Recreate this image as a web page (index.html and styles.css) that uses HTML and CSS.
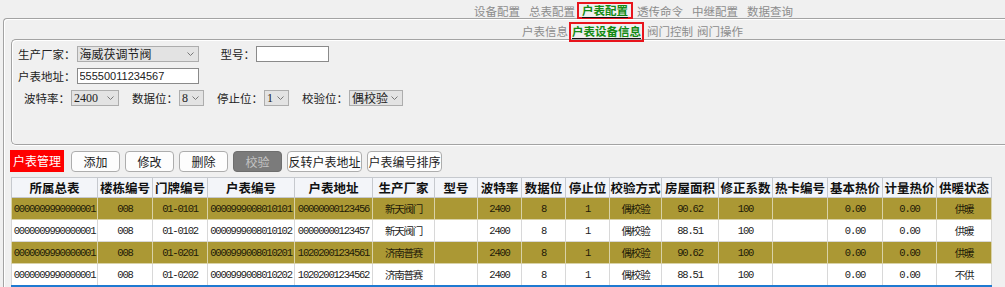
FILE: index.html
```html
<!DOCTYPE html>
<html lang="zh-CN">
  <head>
    <meta charset="UTF-8" />
    <meta name="viewport" content="width=device-width, initial-scale=1.0" />
    <title>户表设备信息</title>
    <link rel="stylesheet" href="styles.css">
  </head>
  <body>
    <div class="topnav">
      <a href="#">设备配置</a>
      <a href="#">总表配置</a>
      <a href="#" class="current">户表配置</a>
      <a href="#">透传命令</a>
      <a href="#">中继配置</a>
      <a href="#">数据查询</a>
    </div>

    <div class="panel">
      <div class="subnav">
        <a href="#">户表信息</a>
        <a href="#" class="current">户表设备信息</a>
        <a href="#">阀门控制</a>
        <a href="#">阀门操作</a>
      </div>

      <!-- filter box -->
      <div class="group">
        <div class="row">
          <label class="field">生产厂家：
            <span class="combo w-factory"><span>海威茯调节阀</span><svg width="7" height="4" viewBox="0 0 7 4"><polyline points="0.5,0.5 3.5,3.5 6.5,0.5" fill="none" stroke="#777" stroke-width="1"/></svg></span>
          </label>
          <label class="field">型号：
            <input class="text w-model" type="text" />
          </label>
        </div>
        <div class="row">
          <label class="field">户表地址：
            <input class="text w-addr" type="text" value="55550011234567" />
          </label>
        </div>
        <div class="row row-serial">
          <label class="field">波特率：
            <span class="combo w-baud"><span>2400</span><svg width="7" height="4" viewBox="0 0 7 4"><polyline points="0.5,0.5 3.5,3.5 6.5,0.5" fill="none" stroke="#777" stroke-width="1"/></svg></span>
          </label>
          <label class="field">数据位：
            <span class="combo w-small"><span>8</span><svg width="7" height="4" viewBox="0 0 7 4"><polyline points="0.5,0.5 3.5,3.5 6.5,0.5" fill="none" stroke="#777" stroke-width="1"/></svg></span>
          </label>
          <label class="field">停止位：
            <span class="combo w-small"><span>1</span><svg width="7" height="4" viewBox="0 0 7 4"><polyline points="0.5,0.5 3.5,3.5 6.5,0.5" fill="none" stroke="#777" stroke-width="1"/></svg></span>
          </label>
          <label class="field">校验位：
            <span class="combo w-parity"><span>偶校验</span><svg width="7" height="4" viewBox="0 0 7 4"><polyline points="0.5,0.5 3.5,3.5 6.5,0.5" fill="none" stroke="#777" stroke-width="1"/></svg></span>
          </label>
        </div>
      </div>

      <div class="toolbar">
        <span class="tag">户表管理</span>
        <button class="btn" type="button">添加</button>
        <button class="btn" type="button">修改</button>
        <button class="btn" type="button">删除</button>
        <button class="btn btn-off" type="button">校验</button>
        <button class="btn btn-wide" type="button">反转户表地址</button>
        <button class="btn btn-wide" type="button">户表编号排序</button>
      </div>

      <table class="grid">
        <colgroup>
          <col style="width: 86px" />
          <col style="width: 55px" />
          <col style="width: 55px" />
          <col style="width: 87px" />
          <col style="width: 78px" />
          <col style="width: 62px" />
          <col style="width: 43px" />
          <col style="width: 44px" />
          <col style="width: 44px" />
          <col style="width: 44px" />
          <col style="width: 52px" />
          <col style="width: 57px" />
          <col style="width: 54px" />
          <col style="width: 55px" />
          <col style="width: 55px" />
          <col style="width: 54px" />
          <col style="width: 55px" />
        </colgroup>
        <thead>
          <tr>
            <th>所属总表</th>
            <th>楼栋编号</th>
            <th>门牌编号</th>
            <th>户表编号</th>
            <th>户表地址</th>
            <th>生产厂家</th>
            <th>型号</th>
            <th>波特率</th>
            <th>数据位</th>
            <th>停止位</th>
            <th>校验方式</th>
            <th>房屋面积</th>
            <th>修正系数</th>
            <th>热卡编号</th>
            <th>基本热价</th>
            <th>计量热价</th>
            <th>供暖状态</th>
          </tr>
        </thead>
        <tbody>
          <tr class="alt">
            <td>0000009990000001</td><td>008</td><td>01-0101</td><td>0000999008010101</td><td>00000000123456</td><td>新天阀门</td><td></td>
            <td>2400</td><td>8</td><td>1</td><td>偶校验</td><td>90.62</td><td>100</td><td></td><td>0.00</td><td>0.00</td><td>供暖</td>
          </tr>
          <tr>
            <td>0000009990000001</td><td>008</td><td>01-0102</td><td>0000999008010102</td><td>00000000123457</td><td>新天阀门</td><td></td>
            <td>2400</td><td>8</td><td>1</td><td>偶校验</td><td>88.51</td><td>100</td><td></td><td>0.00</td><td>0.00</td><td>供暖</td>
          </tr>
          <tr class="alt">
            <td>0000009990000001</td><td>008</td><td>01-0201</td><td>0000999008010201</td><td>10202001234561</td><td>济南普赛</td><td></td>
            <td>2400</td><td>8</td><td>1</td><td>偶校验</td><td>90.62</td><td>100</td><td></td><td>0.00</td><td>0.00</td><td>供暖</td>
          </tr>
          <tr>
            <td>0000009990000001</td><td>008</td><td>01-0202</td><td>0000999008010202</td><td>10202001234562</td><td>济南普赛</td><td></td>
            <td>2400</td><td>8</td><td>1</td><td>偶校验</td><td>88.51</td><td>100</td><td></td><td>0.00</td><td>0.00</td><td>不供</td>
          </tr>
          <tr class="selected">
            <td></td><td></td><td></td><td></td><td></td><td></td><td></td><td></td><td></td>
            <td></td><td></td><td></td><td></td><td></td><td></td><td></td><td></td>
          </tr>
        </tbody>
      </table>
    </div>
  </body>
</html>
```

FILE: styles.css
```css
body {
  margin: 0;
  height: 287px;
  overflow: hidden;
  background: #f0f0f0;
  color: #222;
  font-family: "Noto Sans CJK SC", sans-serif;
  font-size: 11.5px;
}

a {
  text-decoration: none;
}

/* top tabs */
.topnav {
  display: flex;
  align-items: flex-start;
  gap: 9px;
  height: 18px;
  box-sizing: border-box;
  padding: 5px 0 0 474px;
}

.topnav a,
.subnav a {
  color: #8c8c8c;
  line-height: 13px;
  white-space: nowrap;
}

.topnav .current {
  margin: -3px -5px 0 -7px;
  padding: 0 3px;
  border: 2px solid #e8141c;
}

.current {
  color: #138a13 !important;
  font-weight: bold;
  text-decoration: underline;
  text-decoration-color: #111;
  text-underline-offset: 2px;
}

/* main panel */
.panel {
  margin-left: 3px;
  height: 269px;
  box-sizing: border-box;
  overflow: hidden;
  border-top: 1px solid #a3a3a3;
  border-left: 1px solid #a3a3a3;
  border-top-left-radius: 4px;
  box-shadow: inset 1px 1px 0 #fff;
}

.subnav {
  display: flex;
  align-items: flex-start;
  gap: 4px;
  height: 20px;
  box-sizing: border-box;
  padding: 6px 0 0 518px;
}

.subnav .current {
  margin: -3px -1px 0 -3px;
  padding: 1px 1px 2px;
  border: 2px solid #e8141c;
}

.group {
  margin-left: 7px;
  height: 106px;
  box-sizing: border-box;
  border: 1px solid #a3a3a3;
  border-right: none;
  border-radius: 5px 0 0 5px;
  box-shadow: inset 1px 1px 0 #fff, 0 1px 0 #fff;
  padding: 6px 0 0 6px;
  display: flex;
  flex-direction: column;
  gap: 6px;
}

.row {
  display: flex;
  align-items: center;
  gap: 22px;
  height: 16px;
}

.row-serial {
  padding-left: 6px;
  gap: 13px;
}

.field {
  display: flex;
  align-items: center;
  gap: 1px;
  white-space: nowrap;
}

.combo {
  display: flex;
  align-items: center;
  justify-content: space-between;
  height: 16px;
  box-sizing: border-box;
  padding: 0 4px 0 2px;
  border: 1px solid #adadad;
  background: #e3e3e3;
  font-family: "Liberation Serif", "Noto Sans CJK SC", serif;
  font-size: 12px;
  color: #222;
}

.text {
  height: 16px;
  box-sizing: border-box;
  margin: 0;
  padding: 0 2px;
  border: 1px solid #8a8a8a;
  background: #fff;
  font-family: "Liberation Sans", sans-serif;
  font-size: 11px;
  color: #222;
}

.w-factory { width: 122px; }
.w-model { width: 73px; }
.w-addr { width: 122px; }
.w-baud { width: 48px; }
.w-small { width: 25px; }
.w-parity { width: 54px; }

/* toolbar */
.toolbar {
  display: flex;
  align-items: center;
  gap: 5px;
  height: 22px;
  margin-top: 5px;
  padding-left: 6px;
}

.tag {
  width: 54px;
  height: 22px;
  margin-right: 2px;
  background: #ff0000;
  color: #fff;
  font-size: 12px;
  line-height: 22px;
  text-align: center;
}

.btn {
  width: 49px;
  height: 21px;
  padding: 0;
  border: 1px solid #adadad;
  border-radius: 4px;
  background: #fdfdfd;
  color: #222;
  font-family: "Noto Sans CJK SC", sans-serif;
  font-size: 12px;
  white-space: nowrap;
}

.btn-off {
  background: #7b7b7b;
  border-color: #6e6e6e;
  color: #c4c4c4;
}

.btn-wide {
  width: 75px;
}

/* data grid */
.grid {
  margin: 5px 0 0 7px;
  width: 980px;
  table-layout: fixed;
  border-collapse: collapse;
}

.grid th {
  height: 19px;
  padding: 0;
  border: 1px solid #c6c9ce;
  background: #f3f5f9;
  color: #111;
  font-size: 12.5px;
  font-weight: bold;
  white-space: nowrap;
  overflow: hidden;
}

.grid td {
  height: 21px;
  padding: 0;
  border: 1px solid #d8d8d8;
  background: #fff;
  color: #222;
  font-family: "Liberation Mono", "Noto Sans CJK SC", monospace;
  font-size: 10.5px;
  letter-spacing: -1.2px;
  text-align: center;
  white-space: nowrap;
  overflow: hidden;
}

.grid .alt td {
  background: #ab9834;
  border-color: #d9d2a8;
  color: #1e1a08;
}

.grid .selected td {
  background: #1f7ad1;
  border-color: #69a8e2;
  border-top: 2px solid #1f7ad1;
}
```
